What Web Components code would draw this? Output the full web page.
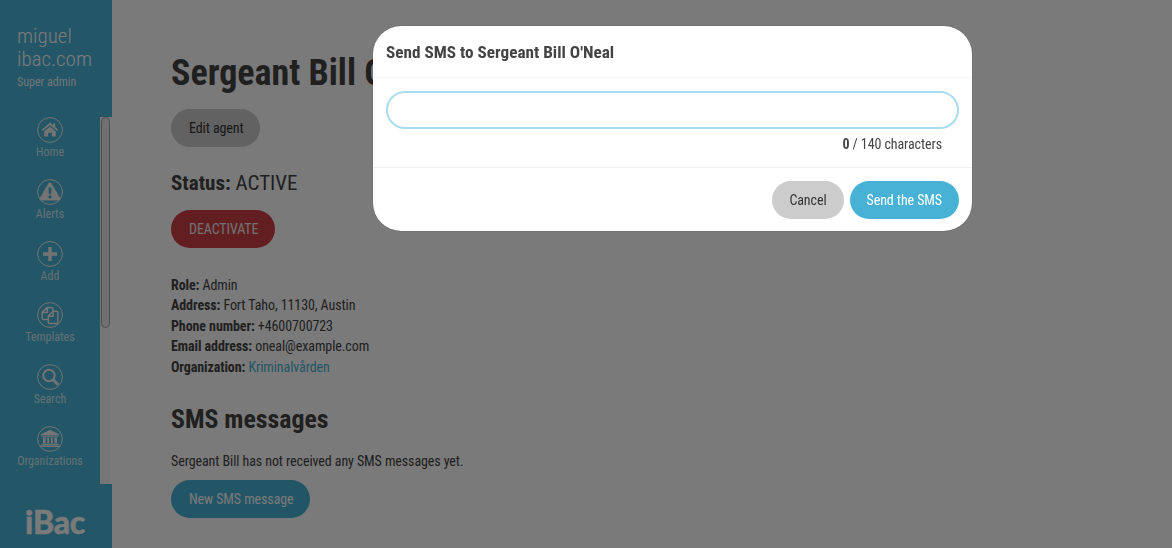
<!DOCTYPE html>
<html>
<head>
<meta charset="utf-8">
<title>iBac</title>
<style>
  html, body { margin: 0; height: 100%; overflow: hidden; }
  body {
    background: #fff;
    color: #444;
    font-family: "Roboto Condensed", "Roboto", sans-serif;
    font-stretch: condensed;
    font-size: 14px;
  }
</style>
</head>
<body>

<ibac-app>
  <ibac-sidebar slot="side" name="miguel ibac.com" role="Super admin">
    <ibac-nav-item label="Home" icon="home"></ibac-nav-item>
    <ibac-nav-item label="Alerts" icon="alert"></ibac-nav-item>
    <ibac-nav-item label="Add" icon="add"></ibac-nav-item>
    <ibac-nav-item label="Templates" icon="templates"></ibac-nav-item>
    <ibac-nav-item label="Search" icon="search"></ibac-nav-item>
    <ibac-nav-item label="Organizations" icon="org"></ibac-nav-item>
  </ibac-sidebar>

  <ibac-agent-page></ibac-agent-page>

  <ibac-sms-dialog slot="overlay" person="Sergeant Bill O'Neal"></ibac-sms-dialog>
</ibac-app>

<script>
const ICONS = {
  home: `<path fill="currentColor" d="M13 5.6 4.8 12.7l1.1 1.2L13 7.9l7.1 6 1.1-1.2-3-2.6V6.6h-2.1v1.7zM7.2 14.4V19.4h3.9v-3.6h3.8v3.6h3.9v-5L13 9.4z"/>`,
  alert: `<path fill="currentColor" fill-rule="evenodd" d="M13 3.6c.7 0 1.3.4 1.6 1l8.6 14.4c.7 1.2-.1 2.6-1.5 2.6H4.3c-1.4 0-2.2-1.4-1.5-2.6L11.4 4.6c.3-.6.9-1 1.6-1zM11.5 8.6l.4 6.6h2.2l.4-6.6zM13 16.2a1.7 1.7 0 1 0 0 3.4 1.7 1.7 0 0 0 0-3.4z"/>`,
  add: `<path fill="currentColor" d="M11.3 6h3.4v5.3H20v3.4h-5.3V20h-3.4v-5.3H6v-3.4h5.3z"/>`,
  templates: `<path fill="none" stroke="currentColor" stroke-width="1.5" stroke-linejoin="round" d="M10.6 17.4H6.4c-.8 0-1.3-.5-1.3-1.3V10.4L10 5.6h4.6c.8 0 1.3.5 1.3 1.3v2.4M10.4 5.8v4.8H5.2M12.6 21.6c-.8 0-1.3-.5-1.3-1.3V13.9l4.7-4.6h3.6c.8 0 1.3.5 1.3 1.3v9.7c0 .8-.5 1.3-1.3 1.3zM16.2 9.6v4.6h-4.7"/>`,
  search: `<circle cx="12" cy="11.5" r="5.7" fill="none" stroke="currentColor" stroke-width="2"/><path fill="none" stroke="currentColor" stroke-width="3" stroke-linecap="round" d="M16.6 16.2l3.8 3.8"/>`,
  org: `<path fill="currentColor" d="M13 3.8l9 4.4v1.4H4V8.2zM4.6 10.2h16.8v1H4.6zM6 11.8h2.6v5.4H6zM10.2 11.8h1.9v5.4h-1.9zM13.9 11.8h1.9v5.4h-1.9zM17.4 11.8H20v5.4h-2.6zM4.6 17.7h16.8v1.2H4.6zM3 19.5h20V21H3z"/>`
};

class IbacApp extends HTMLElement {
  constructor() {
    super();
    this.attachShadow({ mode: "open" }).innerHTML = `
    <style>
      :host { display: flex; height: 548px; }
      ::slotted(ibac-agent-page) { flex: 1; min-width: 0; }
      .scrim {
        position: fixed;
        inset: 0;
        background: rgba(0, 0, 0, 0.52);
        display: flex;
        justify-content: center;
        align-items: flex-start;
        padding: 26px 0 0 173px;
      }
    </style>
    <slot name="side"></slot>
    <slot></slot>
    <div class="scrim"><slot name="overlay"></slot></div>`;
  }
}

class IbacSidebar extends HTMLElement {
  constructor() {
    super();
    this.attachShadow({ mode: "open" }).innerHTML = `
    <style>
      :host { display: flex; flex-direction: column; width: 112px; flex: none; height: 548px; color: #fff; }
      .who { background: #4ab4d8; height: 117px; box-sizing: border-box; padding: 25px 17px 0; flex: none; }
      .name { font-size: 21px; line-height: 23px; font-weight: 300; width: 80px; }
      .role { font-size: 12px; line-height: 14px; margin-top: 4px; color: rgba(255, 255, 255, 0.9); }
      .mid { flex: 1; min-height: 0; display: flex; }
      nav { width: 100px; background: #4ab4d8; display: flex; flex-direction: column; gap: 14.8px; }
      .rail { width: 10px; background: #f6f6f6; }
      .thumb { height: 211px; width: 9px; margin-left: 1px; box-sizing: border-box; background: #eaeaea; border: 1px solid #a6a6a6; border-radius: 5px; }
      .logo { background: #4ab4d8; height: 64px; flex: none; display: flex; align-items: center; padding-left: 25px; padding-top: 10px; box-sizing: border-box; }
      .logo span { font: 900 32px "Lato", "Roboto", sans-serif; color: #fff; letter-spacing: -0.2px; -webkit-text-stroke: 0.4px #fff; }
    </style>
    <div class="who">
      <div class="name">${this.getAttribute("name")}</div>
      <div class="role">${this.getAttribute("role")}</div>
    </div>
    <div class="mid">
      <nav><slot></slot></nav>
      <div class="rail"><div class="thumb"></div></div>
    </div>
    <div class="logo"><span>iBac</span></div>`;
  }
}

class IbacNavItem extends HTMLElement {
  constructor() {
    super();
    this.attachShadow({ mode: "open" }).innerHTML = `
    <style>
      :host { display: flex; flex-direction: column; align-items: center; color: #f2f2f2; height: 47px; }
      svg { width: 26px; height: 26px; display: block; }
      span { font-size: 12px; line-height: 14px; margin-top: 2px; color: rgba(255, 255, 255, 0.75); }
    </style>
    <svg viewBox="0 0 26 26"><circle cx="13" cy="13" r="12.4" fill="none" stroke="currentColor" stroke-width="1"/>${ICONS[this.getAttribute("icon")]}</svg>
    <span>${this.getAttribute("label")}</span>`;
  }
}

class IbacButton extends HTMLElement {
  constructor() {
    super();
    this.attachShadow({ mode: "open" }).innerHTML = `
    <style>
      :host { display: inline-flex; align-items: center; height: 38px; box-sizing: border-box; padding: 0 17px; border-radius: 19px; font-size: 14px; letter-spacing: -0.09px; background: #ccc; color: #333; }
      :host([kind="primary"]) { background: #47b2d5; color: #fff; }
      :host([kind="danger"]) { background: #cc3f44; color: #eee; }
    </style>
    <slot></slot>`;
  }
}

class IbacAgentPage extends HTMLElement {
  constructor() {
    super();
    this.attachShadow({ mode: "open" }).innerHTML = `
    <style>
      :host { display: block; padding: 51px 0 0 59px; box-sizing: border-box; color: #444; letter-spacing: -0.09px; }
      h1 { margin: 0; font-size: 36px; line-height: 44px; font-weight: 700; letter-spacing: 0; }
      h2 { margin: 26px 0 0; font-size: 25.8px; line-height: 30px; font-weight: 700; letter-spacing: 0; }
      .status { font-size: 21px; line-height: 24px; margin: 24px 0 15px; letter-spacing: 0; }
      .edit { margin-top: 14px; }
      dl { margin: 26.7px 0 0; line-height: 20.6px; }
      dt { display: inline; font-weight: 700; }
      dd { display: inline; margin: 0; }
      a { color: #47b2d5; text-decoration: none; }
      p { margin: 17px 0 9px; line-height: 20px; }
      .row { display: flex; }
      .row ibac-button { padding: 0 16.5px 0 18px; }
    </style>
    <h1>Sergeant Bill O'Neal</h1>
    <div class="row edit"><ibac-button>Edit agent</ibac-button></div>
    <div class="status"><b>Status:</b> ACTIVE</div>
    <div class="row"><ibac-button kind="danger">DEACTIVATE</ibac-button></div>
    <dl>
      <div><dt>Role:</dt> <dd>Admin</dd></div>
      <div><dt>Address:</dt> <dd>Fort Taho, 11130, Austin</dd></div>
      <div><dt>Phone number:</dt> <dd>+4600700723</dd></div>
      <div><dt>Email address:</dt> <dd>oneal@example.com</dd></div>
      <div><dt>Organization:</dt> <dd><a href="#">Kriminalvården</a></dd></div>
    </dl>
    <h2>SMS messages</h2>
    <p>Sergeant Bill has not received any SMS messages yet.</p>
    <div class="row"><ibac-button kind="primary">New SMS message</ibac-button></div>`;
  }
}

class IbacSmsDialog extends HTMLElement {
  constructor() {
    super();
    this.attachShadow({ mode: "open" }).innerHTML = `
    <style>
      :host { display: block; width: 599px; height: 205px; background: #fff; border-radius: 28px; color: #444; overflow: hidden; box-shadow: 0 0 1px rgba(0, 0, 0, 0.6); }
      header { height: 52px; box-sizing: border-box; border-bottom: 1px solid #f4f4f4; padding: 0 13px; display: flex; align-items: center; }
      h3 { margin: 0; font-size: 17.2px; font-weight: 700; }
      .body { height: 90px; box-sizing: border-box; border-bottom: 1px solid #f1f1f1; padding: 13px 13px 0; }
      input { display: block; width: 100%; height: 38px; box-sizing: border-box; border: 2px solid #a8dcee; border-radius: 19px; outline: none; background: #fff; }
      .count { text-align: right; padding-right: 17px; margin-top: 5px; line-height: 20px; letter-spacing: -0.09px; }
      footer { display: flex; justify-content: flex-end; gap: 6px; padding: 13px 13px 0; }
    </style>
    <header><h3>Send SMS to ${this.getAttribute("person")}</h3></header>
    <div class="body">
      <input type="text">
      <div class="count"><b>0</b> / 140 characters</div>
    </div>
    <footer><ibac-button>Cancel</ibac-button><ibac-button kind="primary">Send the SMS</ibac-button></footer>`;
  }
}

customElements.define("ibac-app", IbacApp);
customElements.define("ibac-sidebar", IbacSidebar);
customElements.define("ibac-nav-item", IbacNavItem);
customElements.define("ibac-button", IbacButton);
customElements.define("ibac-agent-page", IbacAgentPage);
customElements.define("ibac-sms-dialog", IbacSmsDialog);
</script>
</body>
</html>
